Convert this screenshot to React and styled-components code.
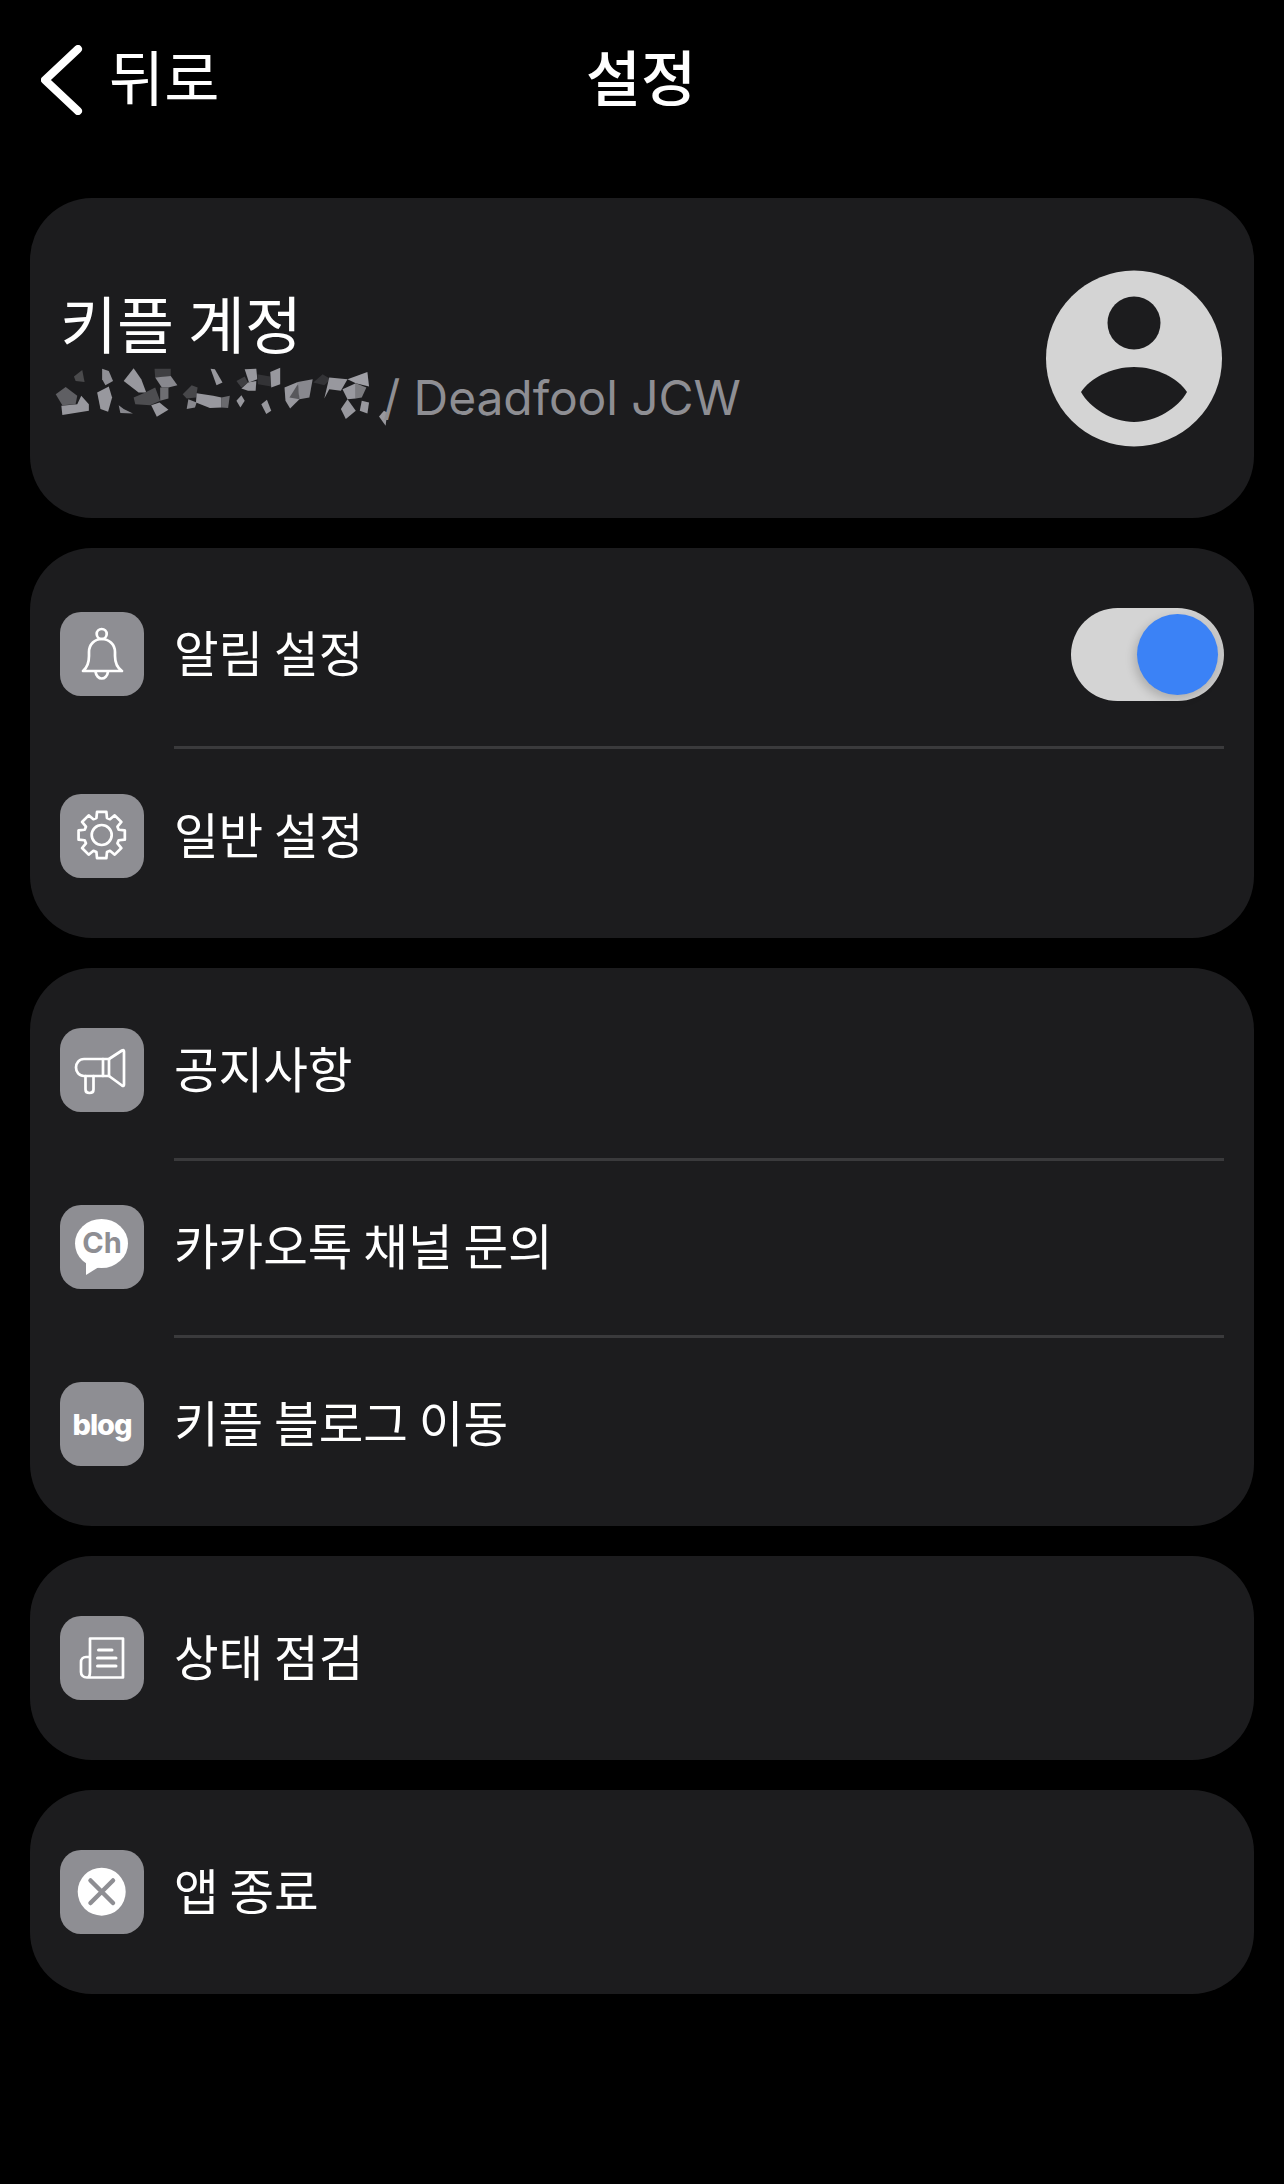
import React from 'react'
import styled, { createGlobalStyle } from 'styled-components'

const GlobalStyle = createGlobalStyle`
  html, body {
    margin: 0;
    padding: 0;
    background: #000;
  }
  body {
    font-family: "Noto Sans CJK KR", "Noto Sans", sans-serif;
    color: #fff;
  }
`

const Page = styled.div`
  width: 1284px;
  min-height: 2184px;
  box-sizing: border-box;
  padding: 45px 30px 0;
  background: #000;
`

const Header = styled.header`
  display: grid;
  grid-template-columns: 1fr auto 1fr;
  align-items: center;
  height: 70px;
  margin-bottom: 83px;
`

const BackButton = styled.div`
  display: flex;
  align-items: center;
  gap: 26px;
  margin-left: 11px;
  font-size: 60px;
  line-height: 60px;
  font-weight: 400;
`

const BackLabel = styled.span`
  padding-bottom: 10px;
`

const Title = styled.h1`
  margin: 0 2px 10px 0;
  font-size: 60px;
  line-height: 60px;
  font-weight: 500;
`

const Stack = styled.main`
  display: flex;
  flex-direction: column;
  gap: 30px;
`

const Card = styled.section`
  background: #1c1c1e;
  border-radius: 62px;
  padding: 60px 30px;
`

const AccountCard = styled(Card)`
  display: flex;
  align-items: center;
  justify-content: space-between;
  height: 320px;
  box-sizing: border-box;
  padding: 0 32px 0 30px;
`

const AccountText = styled.div`
  display: flex;
  flex-direction: column;
`

const AccountName = styled.div`
  margin-top: -3px;
  font-size: 62px;
  line-height: 72px;
  font-weight: 400;
`

const AccountSub = styled.div`
  display: flex;
  align-items: center;
  height: 66px;
  margin: 6px 0 -3px -7px;
`

const SubText = styled.span`
  margin-left: -7px;
  font-family: Inter, "Liberation Sans", sans-serif;
  font-size: 48px;
  font-weight: 400;
  letter-spacing: -0.1px;
  color: #8e8e93;
  white-space: nowrap;
`

const Row = styled.div`
  display: flex;
  align-items: center;
  gap: 30px;
`

const Tile = styled.div`
  flex: none;
  position: relative;
  display: flex;
  align-items: center;
  justify-content: center;
  width: 84px;
  height: 84px;
  border-radius: 21px;
  background: #8e8e93;
`

const SwitchRow = styled(Row)`
  align-items: flex-start;
  ${Tile} {
    margin-top: 4px;
  }
`

const TileSvg = styled.svg`
  display: block;
  width: 84px;
  height: 84px;
  fill: none;
  stroke: #fff;
  stroke-width: 2.7;
  stroke-linejoin: round;
  stroke-linecap: round;
`

const Label = styled.div`
  flex: 1;
  padding-bottom: 6px;
  font-size: 48.5px;
  line-height: 78px;
  font-weight: 400;
`

const SwitchLabel = styled(Label)`
  margin-top: 4px;
`

const Divider = styled.div`
  height: 3px;
  margin: ${(props) => (props.$even ? '45px 0 45px 114px' : '46px 0 44px 114px')};
  background: #3a3a3c;
`

const BlogMark = styled.span`
  font-family: Inter, "Liberation Sans", sans-serif;
  font-size: 29px;
  font-weight: 800;
  letter-spacing: -1px;
  color: #fff;
`

const ChMark = styled.span`
  position: absolute;
  left: 0;
  right: 0;
  top: 20px;
  text-align: center;
  font-family: Inter, "Liberation Sans", sans-serif;
  font-size: 29px;
  line-height: 36px;
  font-weight: 700;
  color: #8e8e93;
`

const Toggle = styled.div`
  flex: none;
  display: flex;
  justify-content: flex-end;
  width: 153px;
  height: 93px;
  box-sizing: border-box;
  padding: 6px;
  border-radius: 47px;
  background: linear-gradient(90deg, #d4d4d4 70%, #c6c6c6);
`

const Thumb = styled.div`
  width: 81px;
  height: 81px;
  border-radius: 50%;
  background: #3b82f6;
  box-shadow: -3px 4px 10px rgba(0, 0, 0, 0.18);
`

const mosaic = [
  ['100,92 125,72 132,108 105,105', '#4a4a4c'],
  ['185,68 205,75 218,105 195,118 185,100', '#8f8f95'],
  ['45,145 75,123 110,150 105,175 65,178', '#5f5f63'],
  ['110,175 122,150 145,175 145,195 65,208 62,180', '#98989e'],
  ['170,140 205,122 215,155 203,198 180,190', '#98989e'],
  ['235,178 250,190 278,203 240,202', '#88888e'],
  ['250,105 280,67 303,100 318,140 295,140', '#98989e'],
  ['343,68 392,68 392,92 345,95', '#3f3f42'],
  ['345,95 392,90 412,118 385,125 365,125', '#88888e'],
  ['280,155 310,142 345,125 360,165 330,178 285,175', '#4d4d50'],
  ['360,125 385,125 385,158 360,165', '#6e6e72'],
  ['333,178 358,170 385,192 350,213', '#98989e'],
  ['428,145 455,118 473,125 468,155 440,158', '#47474a'],
  ['440,190 445,160 470,170 465,185', '#88888e'],
  ['470,142 520,150 545,155 545,185 510,187 468,170', '#98989e'],
  ['545,155 570,150 565,187 545,185', '#6a6a6e'],
  ['512,68 525,70 548,110 530,118', '#98989e'],
  ['590,165 605,148 615,165 602,185', '#98989e'],
  ['590,105 615,92 625,110 605,125', '#3f3f42'],
  ['615,70 650,68 653,100 628,110', '#98989e'],
  ['605,128 625,110 650,105 648,135 625,135', '#98989e'],
  ['653,85 692,92 695,122 655,115', '#333336'],
  ['692,78 722,65 722,115 695,125', '#98989e'],
  ['665,175 682,162 695,195 680,205', '#98989e'],
  ['735,125 775,108 780,160 752,188 738,165', '#98989e'],
  ['750,155 775,115 780,160', '#58585c'],
  ['775,108 820,100 810,155 780,160', '#88888e'],
  ['822,110 850,85 875,100 855,118', '#333336'],
  ['855,158 870,95 925,100 905,135 870,130', '#98989e'],
  ['925,100 985,78 990,122 950,112', '#a0a0a6'],
  ['910,130 950,112 950,158 925,160', '#9a9aa0'],
  ['950,112 982,125 968,155 950,158', '#7c7c80'],
  ['905,190 925,160 950,195 920,220', '#98989e'],
  ['962,195 968,165 990,170 985,203', '#98989e'],
  ['1020,212 1035,195 1045,200 1040,240', '#98989e'],
]

// 8 tooth gear outline, tile coordinates
const gearPath = (() => {
  const cx = 41.7
  const cy = 41
  const pts = []
  for (let i = 0; i < 8; i++) {
    const a = (i * Math.PI) / 4 - Math.PI / 2
    const at = (r, d) => `${(cx + r * Math.cos(a + d)).toFixed(2)} ${(cy + r * Math.sin(a + d)).toFixed(2)}`
    pts.push(at(17.8, -0.3), at(23.6, -0.2), at(23.6, 0.2), at(17.8, 0.3))
  }
  return `M${pts.join('L')}Z`
})()

const BellIcon = () => (
  <TileSvg viewBox="0 0 84 84">
    <circle cx="41.7" cy="22" r="5" />
    <path d="M23 59C28 55 29 50 29 44V40C29 32 35 27 41.7 27C48.5 27 55 32 55 40V44C55 50 56 55 62 59Z" />
    <path d="M35.5 59.5C36 64 39 66.5 41.7 66.5C44.5 66.5 47.5 64 48 59.5" />
  </TileSvg>
)

const GearIcon = () => (
  <TileSvg viewBox="0 0 84 84">
    <path d={gearPath} />
    <circle cx="41.7" cy="41" r="10" />
  </TileSvg>
)

const MegaphoneIcon = () => (
  <TileSvg viewBox="0 0 84 84">
    <path d="M24 31H49L62 22.5Q64 21.2 64 23.5V56.5Q64 58.8 62 57.5L49 48H24C19 48 16 44 16 39.5C16 35 19 31 24 31Z" />
    <path d="M43 31V48M49 31V48" />
    <path d="M25.5 48V61.5Q25.5 65 29.5 65Q33.5 65 33.5 61.5V48" />
  </TileSvg>
)

const BubbleSvg = styled(TileSvg)`
  fill: #fff;
  stroke: none;
`

const ChannelIcon = () => (
  <>
    <BubbleSvg viewBox="0 0 84 84">
      <ellipse cx="41.5" cy="38.5" rx="26.5" ry="24.5" />
      <path d="M26 55V70L42 60Z" />
    </BubbleSvg>
    <ChMark>Ch</ChMark>
  </>
)

const NewsIcon = () => (
  <TileSvg viewBox="0 0 84 84">
    <path d="M30 41V22.5H63V61.5H27C23 61.5 21 59 21 56V46C21 43 23 41 26 41H30V56C30 59 29 61.5 27 61.5" />
    <path d="M38.5 34H52M37.5 42H56M37.5 50H56" strokeWidth="3" />
  </TileSvg>
)

const CloseIcon = () => (
  <TileSvg viewBox="0 0 84 84">
    <circle cx="41.7" cy="41.7" r="24" fill="#fff" stroke="none" />
    <path d="M30.5 30.5L53 53M53 30.5L30.5 53" stroke="#8e8e93" strokeWidth="4.5" />
  </TileSvg>
)

const Avatar = () => (
  <svg width="176" height="177" viewBox="0 0 176 177">
    <circle cx="88" cy="88.5" r="88" fill="#d4d4d4" />
    <ellipse cx="88" cy="53" rx="26.5" ry="26.5" fill="#1c1c1e" />
    <path d="M35 122C44 108 66 97 88 97C110 97 132 108 141 122C132 138 110 152 88 152C66 152 44 138 35 122Z" fill="#1c1c1e" />
  </svg>
)

const App = () => (
  <Page>
    <GlobalStyle />
    <Header>
      <BackButton>
        <svg width="42" height="70" viewBox="0 0 42 70" fill="none" stroke="#fff" strokeWidth="8" strokeLinecap="round" strokeLinejoin="round">
          <path d="M37 4L4 35L37 66" />
        </svg>
        <BackLabel>뒤로</BackLabel>
      </BackButton>
      <Title>설정</Title>
      <div />
    </Header>
    <Stack>
      <AccountCard>
        <AccountText>
          <AccountName>키플 계정</AccountName>
          <AccountSub>
            <svg width="337" height="63" viewBox="40 60 1010 190">
              {mosaic.map(([points, fill]) => (
                <polygon key={points} points={points} fill={fill} />
              ))}
            </svg>
            <SubText>/ Deadfool JCW</SubText>
          </AccountSub>
        </AccountText>
        <Avatar />
      </AccountCard>

      <Card>
        <SwitchRow>
          <Tile><BellIcon /></Tile>
          <SwitchLabel>알림 설정</SwitchLabel>
          <Toggle><Thumb /></Toggle>
        </SwitchRow>
        <Divider $even />
        <Row>
          <Tile><GearIcon /></Tile>
          <Label>일반 설정</Label>
        </Row>
      </Card>

      <Card>
        <Row>
          <Tile><MegaphoneIcon /></Tile>
          <Label>공지사항</Label>
        </Row>
        <Divider />
        <Row>
          <Tile><ChannelIcon /></Tile>
          <Label>카카오톡 채널 문의</Label>
        </Row>
        <Divider />
        <Row>
          <Tile><BlogMark>blog</BlogMark></Tile>
          <Label>키플 블로그 이동</Label>
        </Row>
      </Card>

      <Card>
        <Row>
          <Tile><NewsIcon /></Tile>
          <Label>상태 점검</Label>
        </Row>
      </Card>

      <Card>
        <Row>
          <Tile><CloseIcon /></Tile>
          <Label>앱 종료</Label>
        </Row>
      </Card>
    </Stack>
  </Page>
)

export default App
